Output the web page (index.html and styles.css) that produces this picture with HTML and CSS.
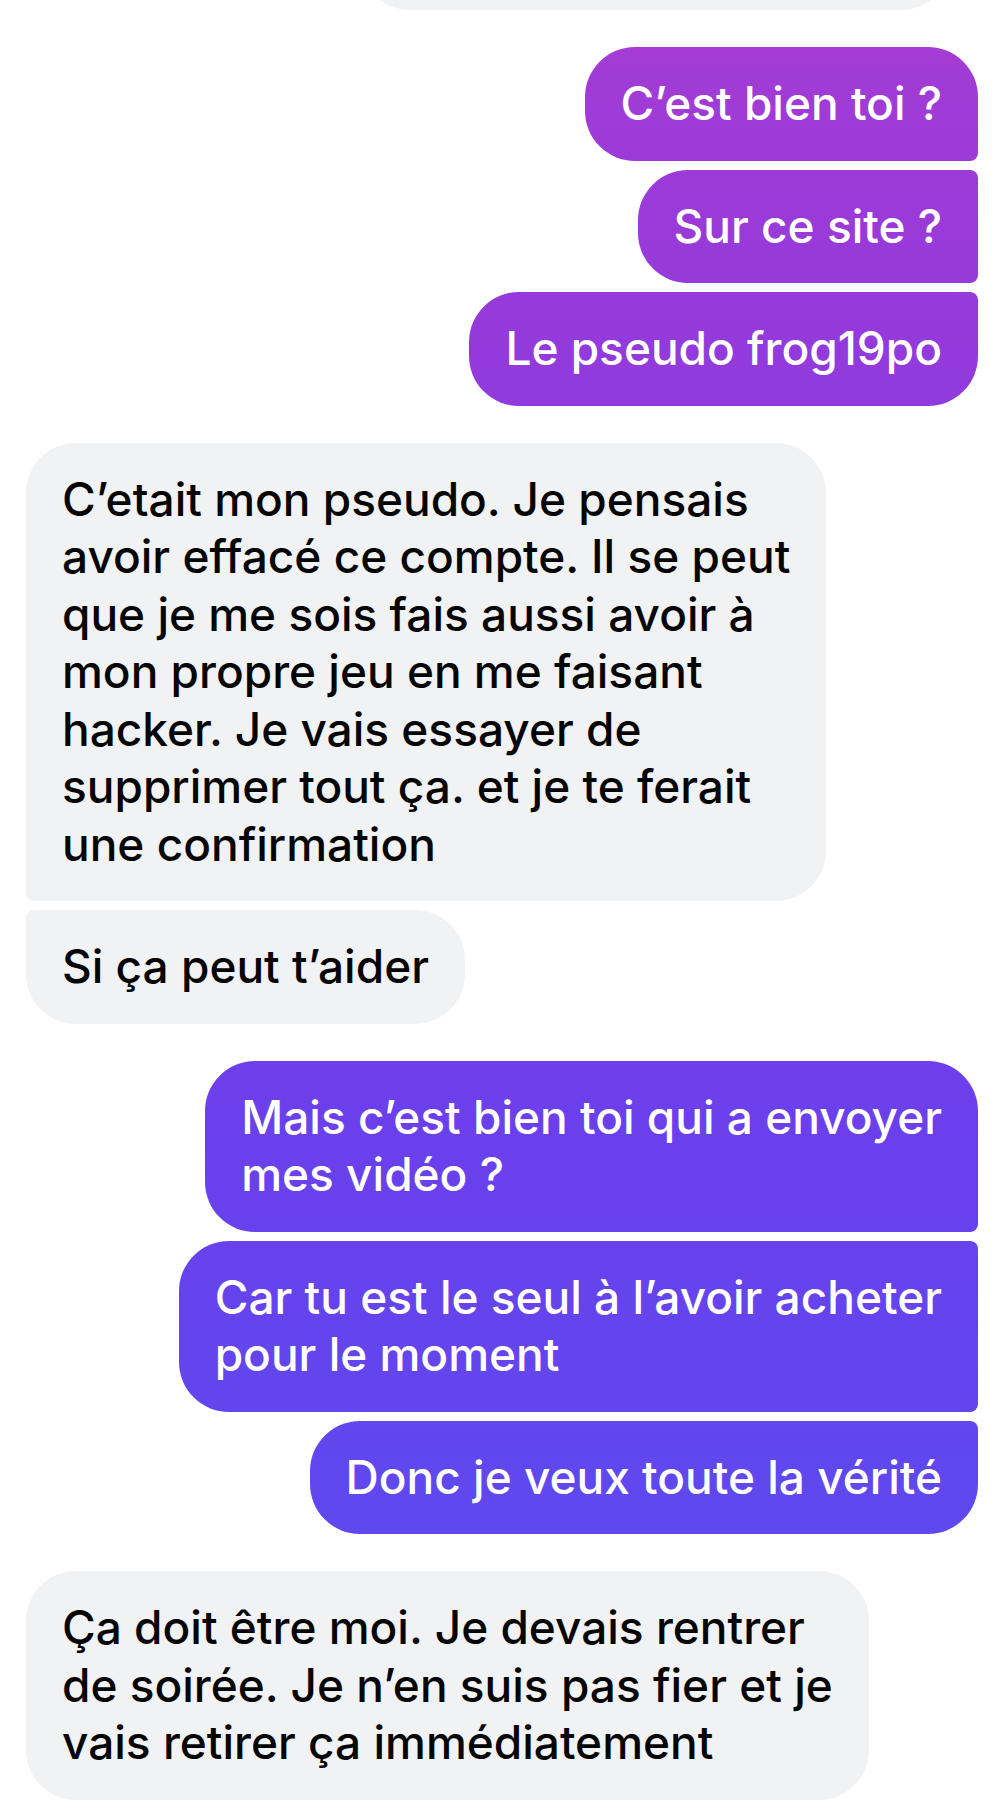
FILE: index.html
```html
<!DOCTYPE html>
<html lang="fr">
<head>
    <meta charset="UTF-8">
    <meta name="viewport" content="width=device-width, initial-scale=1.0">
    <title>Messages</title>
    <link rel="stylesheet" href="styles.css">
</head>
<body>
    <div class="thread">
        <div class="cut-bubble"></div>

        <div class="group mine">
            <div class="bubble first">C’est bien toi ?</div>
            <div class="bubble mid">Sur ce site ?</div>
            <div class="bubble last">Le pseudo frog19po</div>
        </div>

        <div class="group theirs">
            <div class="bubble first">C’etait mon pseudo. Je pensais<br>avoir effacé ce compte. Il se peut<br>que je me sois fais aussi avoir à<br>mon propre jeu en me faisant<br>hacker. Je vais essayer de<br>supprimer tout ça. et je te ferait<br>une confirmation</div>
            <div class="bubble last">Si ça peut t’aider</div>
        </div>

        <div class="group mine">
            <div class="bubble first">Mais c’est bien toi qui a envoyer<br>mes vidéo ?</div>
            <div class="bubble mid">Car tu est le seul à l’avoir acheter<br>pour le moment</div>
            <div class="bubble last">Donc je veux toute la vérité</div>
        </div>

        <div class="group theirs">
            <div class="bubble single">Ça doit être moi. Je devais rentrer<br>de soirée. Je n’en suis pas fier et je<br>vais retirer ça immédiatement</div>
        </div>
    </div>
</body>
</html>
```

FILE: styles.css
```css
body { margin: 0; background: #fff; font-family: Inter, "Noto Sans", sans-serif; overflow: hidden; }

.thread { display: flex; flex-direction: column; gap: 37px; padding: 0 22px 0 26px; }

.cut-bubble { align-self: flex-end; width: 591px; height: 113px; margin-top: -103px; margin-right: 27px; background: #f1f2f4; border-radius: 50px; }

.group { display: flex; flex-direction: column; gap: 9px; }
.group.mine { align-items: flex-end; }
.group.theirs { align-items: flex-start; }

.bubble {
    padding: 28px 36px;
    font-size: 46px;
    font-weight: 500;
    line-height: 57.5px;
    white-space: nowrap;
    border-radius: 50px;
}

.mine .bubble {
    color: #fff;
    background: linear-gradient(180deg, #a73bd2 0px, #a03bd6 100px, #933adc 350px, #6a40ec 1140px, #6047ee 1480px, #5b4ef0 1819px) fixed;
}
.theirs .bubble { color: #050505; background: #f1f2f4; }

.mine .first { border-bottom-right-radius: 8px; }
.mine .mid { border-top-right-radius: 8px; border-bottom-right-radius: 8px; }
.mine .last { border-top-right-radius: 8px; }

.theirs .first { border-bottom-left-radius: 8px; }
.theirs .mid { border-top-left-radius: 8px; border-bottom-left-radius: 8px; }
.theirs .last { border-top-left-radius: 8px; }
```
